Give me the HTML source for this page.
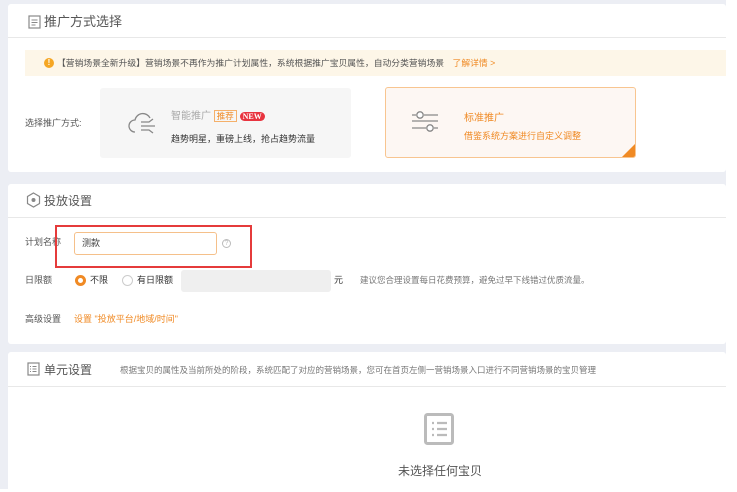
<!DOCTYPE html>
<html><head><meta charset="utf-8"><style>
*{margin:0;padding:0;box-sizing:border-box}
body{width:737px;height:489px;background:#fff;font-family:"Liberation Sans","Noto Sans CJK SC",sans-serif;position:relative;overflow:hidden;color:#333}
.bg{position:absolute;left:0;top:0;width:726px;height:489px;background:#eceef4}
.card{position:absolute;left:8px;width:718px;background:#fff;border-radius:3px}
.hd{position:absolute;left:0;right:0;top:0;border-bottom:1px solid #e8e8e8}
.t{position:absolute;white-space:nowrap;line-height:1}
.o{color:#f08a24}
</style></head><body>
<div class="bg"></div>
<div class="card" style="top:4px;height:168px">
  <div class="hd" style="height:34px"></div>
  <svg style="position:absolute;left:20px;top:11px" width="13" height="14" viewBox="0 0 13 14"><rect x="1" y="1" width="11" height="12" fill="none" stroke="#888" stroke-width="1.2"/><path d="M3.5 5h6M3.5 7.5h6M3.5 10h4" stroke="#888"/></svg>
  <div class="t" style="left:36px;top:11px;font-size:13px;color:#555">推广方式选择</div>
  <div style="position:absolute;left:17px;top:46px;width:701px;height:26px;background:#fdf6e8"></div>
  <div style="position:absolute;left:36px;top:54px;width:10px;height:10px;border-radius:50%;background:#f5a623;color:#fff;font-size:8px;text-align:center;line-height:10px;font-weight:bold">!</div>
  <div class="t" style="left:49px;top:55px;font-size:8.8px;color:#555">【营销场景全新升级】营销场景不再作为推广计划属性，系统根据推广宝贝属性，自动分类营销场景 <span class="o" style="margin-left:6px">了解详情 &gt;</span></div>
  <div class="t" style="left:17px;top:115px;font-size:9px;color:#555">选择推广方式:</div>
  <div style="position:absolute;left:92px;top:84px;width:251px;height:70px;background:#f6f6f6;border-radius:3px"></div>
  <svg style="position:absolute;left:119px;top:108px" width="34" height="26" viewBox="0 0 34 26"><path d="M8 20a6 6 0 0 1 0-12a8 8 0 0 1 15-2" fill="none" stroke="#888" stroke-width="1.3"/><path d="M14 10h8l4-3M14 14h14M14 18h8l4 3" fill="none" stroke="#888" stroke-width="1.3"/></svg>
  <div class="t" style="left:163px;top:108px;font-size:10px;color:#aaa">智能推广 <span style="border:1px solid #f5b06a;color:#f08a24;font-size:8.5px;padding:0 2px">推荐</span> <span style="background:#e8343f;color:#fff;font-size:8px;font-family:'Liberation Serif',serif;border-radius:6px;padding:0 3px;font-weight:bold">NEW</span></div>
  <div class="t" style="left:163px;top:131px;font-size:9px;color:#333">趋势明星，重磅上线，抢占趋势流量</div>
  <div style="position:absolute;left:377px;top:83px;width:251px;height:71px;background:#fdf7f3;border:1px solid #f8c590;border-radius:3px;overflow:hidden">
    <div style="position:absolute;right:0;bottom:0;width:0;height:0;border-left:13px solid transparent;border-bottom:13px solid #f08a24"></div>
  </div>
  <svg style="position:absolute;left:404px;top:107px" width="28" height="24" viewBox="0 0 28 24"><path d="M0 4h4M12 4h14M0 10h26M0 17h14M22 17h4" stroke="#888" stroke-width="1.3"/><circle cx="8" cy="4" r="3.2" fill="#fff" stroke="#888" stroke-width="1.3"/><circle cx="18" cy="17" r="3.2" fill="#fff" stroke="#888" stroke-width="1.3"/></svg>
  <div class="t" style="left:456px;top:110px;font-size:10px;color:#f08a24">标准推广</div>
  <div class="t" style="left:456px;top:128px;font-size:9px;color:#f08a24">借鉴系统方案进行自定义调整</div>
</div>
<div class="card" style="top:184px;height:160px">
  <div class="hd" style="height:34px"></div>
  <svg style="position:absolute;left:18px;top:8px" width="15" height="16" viewBox="0 0 15 16"><path d="M7.5 1l6 3.5v7l-6 3.5l-6-3.5v-7z" fill="none" stroke="#888" stroke-width="1.2"/><circle cx="7.5" cy="8" r="2" fill="#888"/></svg>
  <div class="t" style="left:36px;top:11px;font-size:12px;color:#555">投放设置</div>
  <div class="t" style="left:17px;top:54px;font-size:9px;color:#555">计划名称</div>
  <div style="position:absolute;left:66px;top:48px;width:143px;height:23px;border:1px solid #f5c08a;border-radius:3px;background:#fff"></div>
  <div class="t" style="left:74px;top:55px;font-size:9px;color:#444">测款</div>
  <div style="position:absolute;left:214px;top:55px;width:9px;height:9px;border:1px solid #bbb;border-radius:50%;font-size:7px;color:#bbb;text-align:center;line-height:7px">?</div>
  <div style="position:absolute;left:47px;top:41px;width:197px;height:43px;border:2px solid #e53b3b"></div>
  <div class="t" style="left:17px;top:92px;font-size:9px;color:#555">日限额</div>
  <div style="position:absolute;left:67px;top:91px;width:11px;height:11px;border:3px solid #f08a24;border-radius:50%"></div>
  <div class="t" style="left:82px;top:92px;font-size:9px;color:#333">不限</div>
  <div style="position:absolute;left:114px;top:91px;width:11px;height:11px;border:1px solid #ccc;border-radius:50%"></div>
  <div class="t" style="left:129px;top:92px;font-size:9px;color:#333">有日限额</div>
  <div style="position:absolute;left:173px;top:86px;width:150px;height:22px;background:#efefef;border-radius:3px"></div>
  <div class="t" style="left:326px;top:92px;font-size:9px;color:#333">元</div>
  <div class="t" style="left:352px;top:92px;font-size:8.5px;color:#777">建议您合理设置每日花费预算，避免过早下线错过优质流量。</div>
  <div class="t" style="left:17px;top:131px;font-size:9px;color:#555">高级设置</div>
  <div class="t o" style="left:66px;top:131px;font-size:9px">设置 "投放平台/地域/时间"</div>
</div>
<div class="card" style="top:352px;height:140px">
  <div class="hd" style="height:35px"></div>
  <svg style="position:absolute;left:19px;top:10px" width="13" height="14" viewBox="0 0 13 14"><rect x="1" y="1" width="11" height="12" fill="none" stroke="#888" stroke-width="1.2"/><path d="M3 4.5h1M5.5 4.5h4M3 7h1M5.5 7h4M3 9.5h1M5.5 9.5h4" stroke="#888"/></svg>
  <div class="t" style="left:36px;top:12px;font-size:12px;color:#555">单元设置</div>
  <div class="t" style="left:112px;top:14px;font-size:8.5px;color:#777">根据宝贝的属性及当前所处的阶段，系统匹配了对应的营销场景，您可在首页左侧一营销场景入口进行不同营销场景的宝贝管理</div>
  <svg style="position:absolute;left:416px;top:61px" width="30" height="32" viewBox="0 0 30 32"><rect x="1.5" y="1.5" width="27" height="29" rx="2" fill="none" stroke="#bbb" stroke-width="3"/><path d="M8 10h2M13 10h10M8 16h2M13 16h10M8 22h2M13 22h10" stroke="#bbb" stroke-width="2.2"/></svg>
  <div class="t" style="left:390px;top:113px;font-size:12px;color:#555">未选择任何宝贝</div>
</div>
</body></html>
